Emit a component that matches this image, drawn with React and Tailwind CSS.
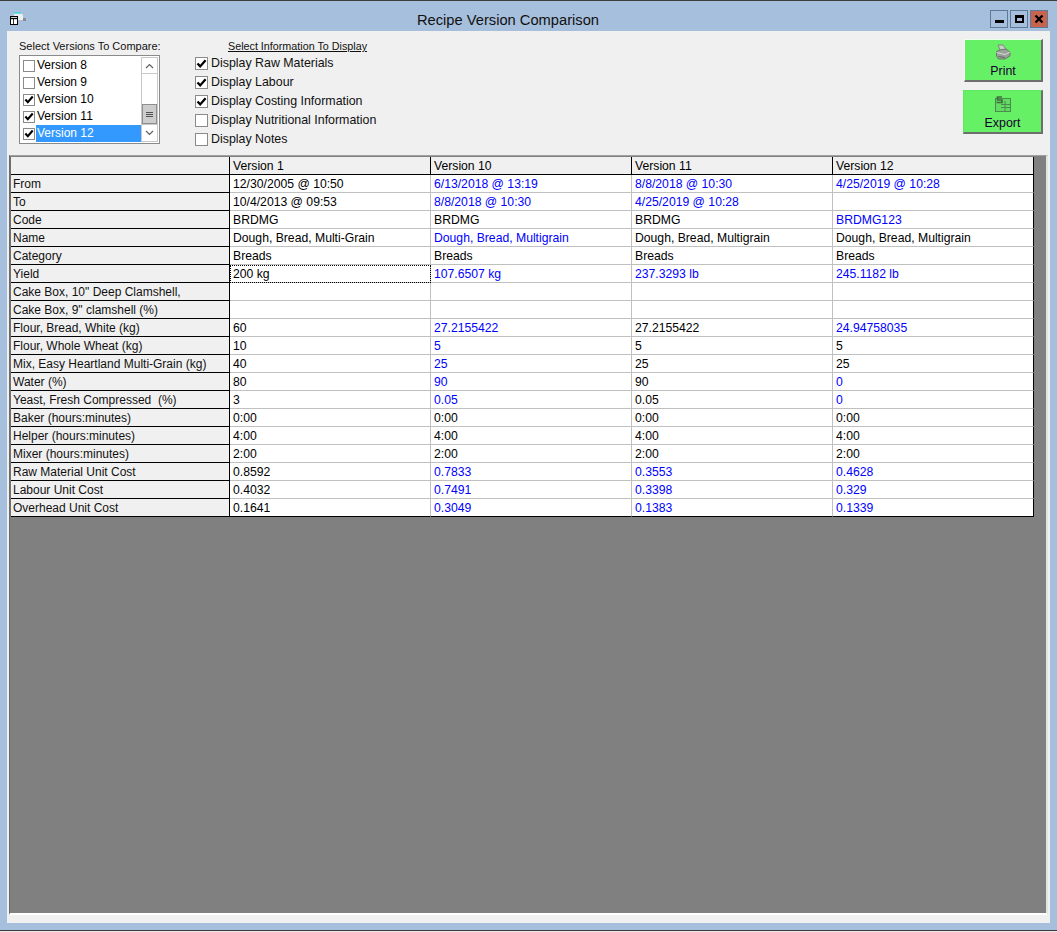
import React from "react";

const B = (t) => ({ t, blue: true });

const rows = [
  ["From", "12/30/2005 @ 10:50", B("6/13/2018 @ 13:19"), B("8/8/2018 @ 10:30"), B("4/25/2019 @ 10:28")],
  ["To", "10/4/2013 @ 09:53", B("8/8/2018 @ 10:30"), B("4/25/2019 @ 10:28"), ""],
  ["Code", "BRDMG", "BRDMG", "BRDMG", B("BRDMG123")],
  ["Name", "Dough, Bread, Multi-Grain", B("Dough, Bread, Multigrain"), "Dough, Bread, Multigrain", "Dough, Bread, Multigrain"],
  ["Category", "Breads", "Breads", "Breads", "Breads"],
  ["Yield", { t: "200 kg", focus: true }, B("107.6507 kg"), B("237.3293 lb"), B("245.1182 lb")],
  ['Cake Box, 10" Deep Clamshell,', "", "", "", ""],
  ['Cake Box, 9" clamshell (%)', "", "", "", ""],
  ["Flour, Bread, White (kg)", "60", B("27.2155422"), "27.2155422", B("24.94758035")],
  ["Flour, Whole Wheat (kg)", "10", B("5"), "5", "5"],
  ["Mix, Easy Heartland Multi-Grain (kg)", "40", B("25"), "25", "25"],
  ["Water (%)", "80", B("90"), "90", B("0")],
  ["Yeast, Fresh Compressed  (%)", "3", B("0.05"), "0.05", B("0")],
  ["Baker (hours:minutes)", "0:00", "0:00", "0:00", "0:00"],
  ["Helper (hours:minutes)", "4:00", "4:00", "4:00", "4:00"],
  ["Mixer (hours:minutes)", "2:00", "2:00", "2:00", "2:00"],
  ["Raw Material Unit Cost", "0.8592", B("0.7833"), B("0.3553"), B("0.4628")],
  ["Labour Unit Cost", "0.4032", B("0.7491"), B("0.3398"), B("0.329")],
  ["Overhead Unit Cost", "0.1641", B("0.3049"), B("0.1383"), B("0.1339")],
];

function Check({ on, size = "w-[13px] h-[13px]" }) {
  return (
    <span className={`${size} shrink-0 bg-white border border-[#8a8a8a] flex items-center justify-center`}>
      {on && (
        <svg viewBox="0 0 11 11" className="w-[11px] h-[11px]">
          <path d="M1.5 5.5 L4.2 8.4 L9.6 2.2" fill="none" stroke="#000" strokeWidth="2.3" />
        </svg>
      )}
    </span>
  );
}

function ListRow({ label, on, selected }) {
  return (
    <div className="flex h-[17px] items-center">
      <span className="w-[15px] pl-[2px] flex items-center"><Check on={on} size="w-[12px] h-[12px]" /></span>
      <span className={`flex-1 h-[17px] pl-[1px] leading-[17px] ${selected ? "bg-[#3399ff] text-white" : "text-black"}`}>{label}</span>
    </div>
  );
}

function Option({ label, on }) {
  return (
    <div className="flex items-center h-[19px] gap-[3px]">
      <Check on={on} />
      <span className="text-[12.4px]">{label}</span>
    </div>
  );
}

function WinBtn({ children, className }) {
  return (
    <div className={`h-[18px] border border-[#5f7a99] flex items-center justify-center ${className}`}>{children}</div>
  );
}

function PrinterIcon() {
  return (
    <svg viewBox="0 0 16 16" className="w-[16px] h-[16px]">
      <path d="M3 1 L8 1 L11.5 6 L5.5 7 Z" fill="#c9d2c9" stroke="#777" strokeWidth="0.8" />
      <path d="M1.5 7.5 L5 5.8 L11 5 L15 8 L15 12 L10 15 L3.5 15 L1.5 12 Z" fill="#9aa39a" stroke="#666" strokeWidth="0.8" />
      <path d="M1.5 8.5 L10 10.5 L15 8" fill="none" stroke="#d5dbd5" strokeWidth="1" />
      <path d="M3.5 12.5 L10 13.5" stroke="#5f665f" strokeWidth="1" />
    </svg>
  );
}

function ExportIcon() {
  return (
    <svg viewBox="0 0 16 16" className="w-[16px] h-[16px]">
      <rect x="0.5" y="2.5" width="15" height="13" fill="#62dc62" stroke="#4d8a4d" />
      <path d="M6 8.5 H15 M6 11.5 H15 M10 5 V15" stroke="#4d8a4d" strokeWidth="1" />
      <path d="M7 1 H2.5 V4 H7 V6.5 H1.5" fill="none" stroke="#3f6f3f" strokeWidth="1.7" />
    </svg>
  );
}

function GreenButton({ icon, label, className }) {
  return (
    <div className={`bg-[#66f066] flex flex-col items-center border-r-2 border-b-2 border-r-[#6e6e6e] border-b-[#6e6e6e] ${className}`}>
      {icon}
      <span className="text-[12.4px] leading-[14px] text-[#1a0030]">{label}</span>
    </div>
  );
}

function Cell({ value, idx, last }) {
  const v = typeof value === "string" ? { t: value } : value;
  return (
    <div
      className={`w-[201px] h-[18px] shrink-0 pl-[3px] pt-px text-[12.2px] leading-[17px] whitespace-pre border-r border-b border-r-[#c0c0c0] bg-white ${
        last ? "border-b-black" : "border-b-[#c0c0c0]"
      } ${v.blue ? "text-[#0000ff]" : "text-black"} ${idx === 3 ? "border-r-black" : ""} ${
        v.focus ? "outline-1 outline-dotted outline-black -outline-offset-1" : ""
      }`}
    >
      {v.t}
    </div>
  );
}

export default function App() {
  return (
    <div
      className="w-[1057px] h-[932px] bg-[#a6bfdc] flex flex-col text-[12px] text-black overflow-hidden"
      style={{ fontFamily: '"Liberation Sans", Arial, sans-serif' }}
    >
      <div className="h-px bg-[#3c3c3c] shrink-0" />
      <div className="h-[30px] shrink-0 flex items-center relative pl-[10px]">
        <svg viewBox="0 0 16 14" className="w-[16px] h-[14px] mt-[6px]">
          <path d="M4 1 H11 L13 3 V8 H8 V4 H4 Z" fill="#e8eef0" />
          <path d="M4 1 H11" stroke="#35d6d6" strokeWidth="1.4" />
          <rect x="13" y="6" width="3" height="3" fill="#8c8c8c" />
          <rect x="0.5" y="4.5" width="7" height="8" fill="#fff" stroke="#000" />
          <path d="M1 6.5 H7" stroke="#000" strokeWidth="1.4" />
          <path d="M3.5 7 V12" stroke="#000" strokeWidth="0.8" />
        </svg>
        <div className="flex-1 text-center text-[14.7px] leading-[16px] text-[#111] pt-[7px] whitespace-nowrap">Recipe Version Comparison</div>
        <div className="flex gap-[2px] mr-[9px] mt-[6px] items-start">
          <WinBtn className="w-[18px]">
            <span className="w-[9px] h-[3px] bg-black mt-[4px]" />
          </WinBtn>
          <WinBtn className="w-[18px]">
            <span className="w-[9px] h-[8px] border-2 border-black border-t-[3px]" />
          </WinBtn>
          <WinBtn className="w-[18px] bg-[#c8634e]">
            <svg viewBox="0 0 10 10" className="w-[10px] h-[10px]">
              <path d="M1.5 1.5 L8.5 8.5 M8.5 1.5 L1.5 8.5" stroke="#000" strokeWidth="2.4" />
            </svg>
          </WinBtn>
        </div>
      </div>

      <div className="mx-[7px] w-[1043px] h-[892px] shrink-0 bg-[#f0f0f0] flex flex-col">
        <div className="h-[124px] shrink-0 flex relative">
          <div className="ml-[12px] mt-[9px] w-[141px] text-[#111]">
            <div className="text-[11px] leading-[12px] whitespace-nowrap">Select Versions To Compare:</div>
            <div className="mt-[3px] w-[141px] h-[89px] border border-[#8a8a8a] bg-white p-[1px] flex">
              <div className="w-[120px]">
                <ListRow label="Version 8" />
                <ListRow label="Version 9" />
                <ListRow label="Version 10" on />
                <ListRow label="Version 11" on />
                <ListRow label="Version 12" on selected />
              </div>
              <div className="w-[17px] flex flex-col border border-[#c8c8c8] bg-white">
                <div className="h-[16px] border-b border-[#c8c8c8] flex items-center justify-center">
                  <svg viewBox="0 0 9 6" className="w-[9px] h-[6px]"><path d="M1 5 L4.5 1.5 L8 5" fill="none" stroke="#606060" strokeWidth="1.2" /></svg>
                </div>
                <div className="h-[30px]" />
                <div className="h-[20px] bg-[#cdcdcd] border border-[#8e8e8e] flex flex-col items-center justify-center gap-[1px]">
                  <span className="w-[7px] h-px bg-[#505050]" />
                  <span className="w-[7px] h-px bg-[#505050]" />
                  <span className="w-[7px] h-px bg-[#505050]" />
                </div>
                <div className="flex-1 border-t border-[#c8c8c8] flex items-center justify-center">
                  <svg viewBox="0 0 9 6" className="w-[9px] h-[6px]"><path d="M1 1 L4.5 4.5 L8 1" fill="none" stroke="#606060" strokeWidth="1.2" /></svg>
                </div>
              </div>
            </div>
          </div>

          <div className="ml-[35px] mt-[9px] w-[200px] text-[#111]">
            <div className="ml-[33px] text-[10.75px] leading-[12px] underline whitespace-nowrap">Select Information To Display</div>
            <div className="mt-[2px] flex flex-col">
              <Option label="Display Raw Materials" on />
              <Option label="Display Labour" on />
              <Option label="Display Costing Information" on />
              <Option label="Display Nutritional Information" />
              <Option label="Display Notes" />
            </div>
          </div>

          <div className="ml-auto mr-[7px] mt-[8px] flex flex-col items-end">
            <GreenButton icon={<div className="mt-[4px] mb-[4px]"><PrinterIcon /></div>} label="Print" className="w-[79px] h-[43px] border-t border-l border-t-[#e8ffe8] border-l-white" />
            <GreenButton icon={<div className="mt-[5px] mb-[4px]"><ExportIcon /></div>} label="Export" className="w-[80px] h-[44px] mt-[8px] border-t border-l border-t-[#5fe85f] border-l-[#5fe85f]" />
          </div>
        </div>

        <div className="mx-[2px] mb-[8px] flex-1 bg-[#808080] border-t border-l border-t-[#a0a0a0] border-l-[#6a6a6a] border-r-2 border-b-2 border-r-[#e4e4e4] border-b-white">
          <div className="w-[1024px] mt-px border-l border-l-[#707070]">
            <div className="flex h-[18px] border-b border-black">
              <div className="w-[219px] shrink-0 bg-[#f0f0f0] border-r border-black" />
              {["Version 1", "Version 10", "Version 11", "Version 12"].map((h) => (
                <div key={h} className="w-[201px] shrink-0 bg-[#f0f0f0] pl-[3px] pt-px text-[12.2px] leading-[17px] border-r border-black">{h}</div>
              ))}
            </div>
            {rows.map((r, n) => (
              <div key={r[0]} className="flex h-[18px]">
                <div className="w-[219px] shrink-0 bg-[#f0f0f0] pl-[2px] pt-px leading-[17px] whitespace-pre border-r border-b border-black text-[#111]">{r[0]}</div>
                {r.slice(1).map((c, i) => (
                  <Cell key={i} value={c} idx={i} last={n === rows.length - 1} />
                ))}
              </div>
            ))}
          </div>
        </div>
      </div>

      <div className="h-[7px] shrink-0" />
      <div className="h-px bg-[#3c3c3c] shrink-0" />
      <div className="flex-1 bg-[#e8e8e8]" />
    </div>
  );
}
